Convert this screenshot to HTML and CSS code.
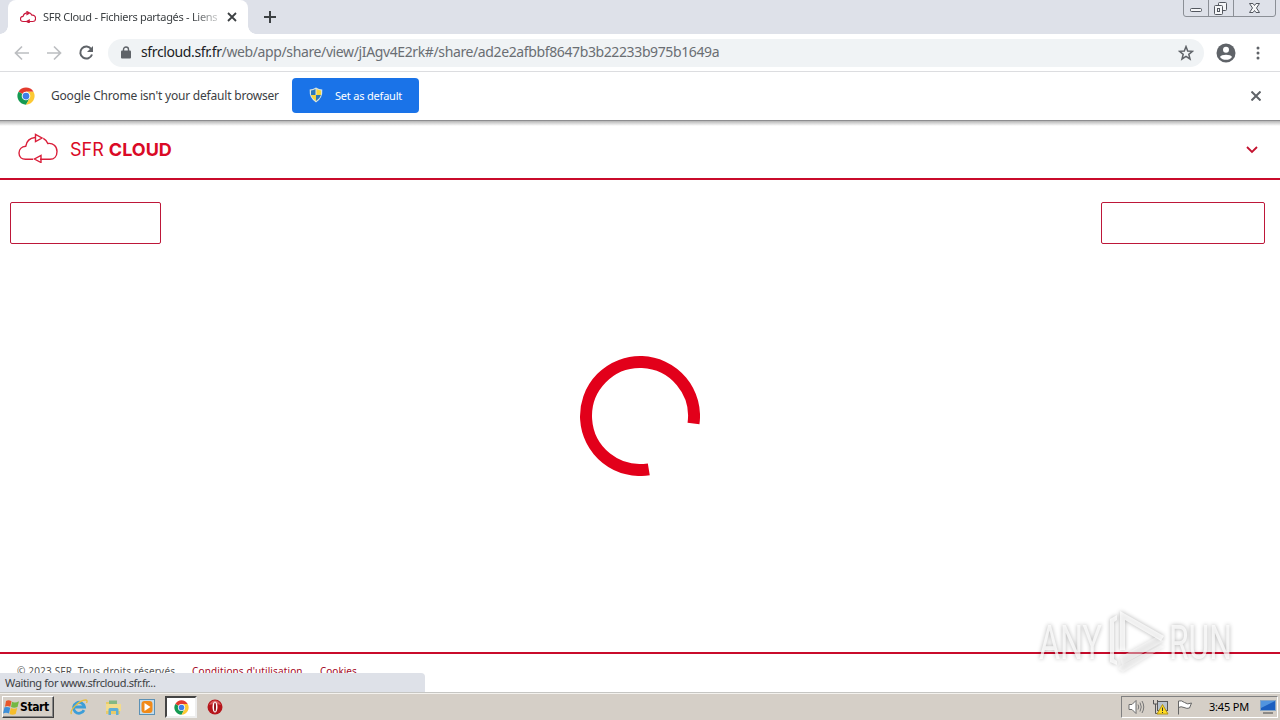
FILE: index.html
```html
<!DOCTYPE html>
<html lang="fr">
<head>
  <meta charset="UTF-8" />
  <title>SFR Cloud - Fichiers partagés - Liens</title>
  <link rel="stylesheet" href="styles.css">
</head>
<body>
  <svg class="defs" width="0" height="0">
    <symbol id="chrome" viewBox="0 0 48 48">
      <circle cx="24" cy="24" r="23" fill="#fff"/>
      <path d="M24 24L4.1 12.5A23 23 0 0 1 43.9 12.5H24z" fill="#e33b2e"/>
      <path d="M24 24L4.1 12.5A23 23 0 0 0 24 47L34 29.7z" fill="#159a52"/>
      <path d="M24 12.5H43.9A23 23 0 0 1 24 47L34 29.7z" fill="#fcc934"/>
      <circle cx="24" cy="24" r="11.5" fill="#fff"/>
      <circle cx="24" cy="24" r="9" fill="#3f7fe8"/>
    </symbol>
    <symbol id="cloud" viewBox="0 0 40 30">
      <path d="M17 4.5C12 5 8.5 8.5 7.8 13.2C3.5 13.5 1 16.5 1 20C1 24 4 26.3 7.5 26.3H15M22 26.3H32C36 26.3 39 23.5 39 18.5C39 13 35 9.8 29.8 10.5C28.8 8 27.2 6.4 25.3 5.4"/>
      <path d="M17.5 1.5V8.5L24 5zM23 22.5V29.5L16.5 26z"/>
    </symbol>
  </svg>

  <div class="tabstrip">
    <div class="tab">
      <svg class="tab-icon" width="16" height="12"><use href="#cloud"/></svg>
      <span class="tab-title">SFR Cloud - Fichiers partagés - Liens</span>
      <svg class="tab-close" width="10" height="10" viewBox="0 0 10 10"><path d="M1 1L9 9M9 1L1 9"/></svg>
    </div>
    <svg class="new-tab" width="12" height="12" viewBox="0 0 12 12"><path d="M6 0V12M0 6H12"/></svg>
    <div class="window-buttons">
      <svg width="97" height="17" viewBox="0 0 97 17">
        <path d="M.5 0V14Q.5 16.5 3 16.5H90Q92.5 16.5 92.5 14V0M25.5 0V16M50.5 0V16" fill="none" stroke="#8b8f96"/>
        <g fill="#f5f6f8" stroke="#53575f">
          <rect x="7.5" y="8.5" width="11" height="3" rx="1"/>
          <rect x="35.5" y="2.5" width="8" height="8" rx="1"/>
          <rect x="31.5" y="5.5" width="8" height="9" rx="1"/>
          <rect x="34.5" y="8.5" width="2" height="3"/>
          <path d="M66.5 3.5H70L71.5 5.5L73 3.5H76.5L73.5 8L76.5 12.5H73L71.5 10.5L70 12.5H66.5L69.5 8z"/>
        </g>
      </svg>
    </div>
  </div>

  <div class="toolbar">
    <svg class="nav-icon off" width="16" height="16" viewBox="0 0 16 16"><path d="M15 8H2M8 1.5L1.5 8L8 14.5"/></svg>
    <svg class="nav-icon off" width="16" height="16" viewBox="0 0 16 16"><path d="M1 8H14M8 1.5L14.5 8L8 14.5"/></svg>
    <svg class="nav-icon" width="16" height="16" viewBox="0 0 16 16"><path d="M13.3 4.2A6 6 0 1 0 14 9.5"/><path class="solid" d="M15 1V7H9z"/></svg>
    <div class="address">
      <svg width="10" height="13" viewBox="0 0 10 13"><path d="M2.5 5V3.5a2.5 2.5 0 0 1 5 0V5" fill="none" stroke="#5f6368" stroke-width="1.4"/><rect y="4.5" width="10" height="8" rx="1" fill="#5f6368"/></svg>
      <span class="url"><b>sfrcloud.sfr.fr</b>/web/app/share/view/jIAgv4E2rk#/share/ad2e2afbbf8647b3b22233b975b1649a</span>
      <svg class="star" width="16" height="16" viewBox="0 0 16 16"><path d="M8 1.6L9.7 6L14.5 6.3L10.8 9.3L12 14L8 11.4L4 14L5.2 9.3L1.5 6.3L6.3 6z"/></svg>
    </div>
    <svg class="avatar" width="20" height="20" viewBox="0 0 20 20"><circle cx="10" cy="10" r="9.5" fill="#5f6368"/><circle cx="10" cy="6.7" r="3" fill="#fff"/><path d="M4 14C5 11 15 11 16 14C13.5 17.8 6.5 17.8 4 14z" fill="#fff"/></svg>
    <svg class="dots" width="4" height="14" viewBox="0 0 4 14"><g fill="#5f6368"><circle cx="2" cy="2" r="1.5"/><circle cx="2" cy="7" r="1.5"/><circle cx="2" cy="12" r="1.5"/></g></svg>
  </div>

  <div class="infobar">
    <svg width="18" height="18"><use href="#chrome"/></svg>
    <span class="info-text">Google Chrome isn't your default browser</span>
    <button class="default-btn">
      <svg width="14" height="16" viewBox="0 0 14 16">
        <path d="M7 .5Q10 2.5 13.3 2.5Q14 11 7 15.5Q0 11 .7 2.5Q4 2.5 7 .5z" fill="#d9e4df"/>
        <path d="M6.5 2Q4.5 3.3 2 3.5V8H6.5z" fill="#2978ba"/><path d="M7.5 2Q9.5 3.3 12 3.5V8H7.5z" fill="#f5d53b"/>
        <path d="M2 8H7V14Q2.7 11 2 8z" fill="#f5d53b"/><path d="M12 8H7V14Q11.3 11 12 8z" fill="#2978ba"/>
      </svg>
      <span>Set as default</span>
    </button>
    <svg class="info-close" width="10" height="10" viewBox="0 0 10 10"><path d="M.5 .5L9.5 9.5M9.5 .5L.5 9.5"/></svg>
  </div>

  <div class="page">
    <header class="header">
      <svg class="logo" width="40" height="30"><use href="#cloud"/></svg>
      <span class="brand">SFR <b>CLOUD</b></span>
      <svg class="chevron" width="12" height="8" viewBox="0 0 12 8"><path d="M1 1L6 6L11 1"/></svg>
    </header>
    <main class="main">
      <div class="actions">
        <div class="box box-left"></div>
        <div class="box box-right"></div>
      </div>
      <svg class="loader" width="120" height="120" viewBox="0 0 120 120"><path d="M113.5 67.5A54 54 0 1 0 68.8 113.3"/></svg>
    </main>
    <footer class="footer">
      <span class="copy">© 2023 SFR. Tous droits réservés</span>
      <a class="terms">Conditions d'utilisation</a>
      <a class="cookies">Cookies</a>
    </footer>
    <div class="status"><span>Waiting for www.sfrcloud.sfr.fr...</span></div>
  </div>

  <div class="taskbar">
    <div class="start">
      <svg width="17" height="17" viewBox="0 0 17 16">
        <path d="M3 1.5Q5.5 0 8.5 1.7L7.3 7.2Q4.5 6 2 7.2z" fill="#e8572b"/><path d="M9 2.3Q12 4 16 1.7L14.5 7.5Q11 9 8 7.5z" fill="#74b843"/>
        <path d="M1.5 7.8Q4.5 7 7.2 8.2L6 14Q3 12.5 0 14z" fill="#3e8fd8"/><path d="M7.8 8.5Q11 10 14.2 8.5L12.7 14.5Q9.5 16 6.5 14.5z" fill="#f5bd2b"/>
      </svg>
      <span>Start</span>
    </div>
    <div class="tasks">
      <div class="task">
        <svg width="18" height="18" viewBox="0 0 18 18"><path d="M14 12.2A5.5 5.5 0 1 1 14.5 9H5" fill="none" stroke="#3c9ed8" stroke-width="2.8"/><path d="M1.5 16C-1 13 9 2 15.5 2Q18 2 16.5 5" fill="none" stroke="#e8bd3c" stroke-width="1.3"/></svg>
      </div>
      <div class="task">
        <svg width="17" height="17" viewBox="0 0 17 17"><path d="M1 3H6L7.5 5H15V15H1z" fill="#e9cb68"/><path d="M4 1.5H12V5H4z" fill="#83b882"/><path d="M1 5H16V12H1z" fill="#f3dc8c"/><path d="M3.5 16V10.5Q3.5 9 5 9H12Q13.5 9 13.5 10.5V16H11V12H6V16z" fill="#5eaed5"/></svg>
      </div>
      <div class="task">
        <svg width="16" height="16" viewBox="0 0 16 16"><rect x=".5" y=".5" width="15" height="15" fill="#c4dcec" stroke="#5c91b5"/><rect x="2.5" y="2" width="11" height="12" rx="3" fill="#f18a19"/><path d="M5.5 4V12L11.5 8z" fill="#fff"/></svg>
      </div>
      <div class="task active"><svg width="15" height="15"><use href="#chrome"/></svg></div>
      <div class="task">
        <svg width="16" height="16" viewBox="0 0 16 16"><circle cx="8" cy="8" r="7.5" fill="#b6161b"/><path d="M2 6Q4 1.5 8 1.5T14 6Q8 4 2 6z" fill="#d8595a"/><ellipse cx="8" cy="8" rx="2.5" ry="5.5" fill="#fff"/><ellipse cx="8" cy="8" rx="1" ry="4.5" fill="#90151a"/></svg>
      </div>
    </div>
    <div class="tray">
      <svg width="17" height="16" viewBox="0 0 17 16"><path d="M1 5.5H4L8 1.5V14.5L4 10.5H1z" fill="#fff" stroke="#6d6d6d"/><path d="M10 5.5Q11.5 8 10 10.5M12 3.5Q14.5 8 12 12.5M14 2Q17.5 8 14 14" fill="none" stroke="#777"/></svg>
      <svg width="17" height="16" viewBox="0 0 17 16"><rect x="5.5" y="2.5" width="10" height="9" fill="#b9c3cd" stroke="#555"/><path d="M1.5 1V5H5.5V1M3.5 5V14.5H7" fill="none" stroke="#555"/><path d="M10.5 5.5L16 15H5z" fill="#ffdc22" stroke="#b29317"/><path d="M10.5 8.5V12M10.5 13V14" stroke="#333"/></svg>
      <svg width="17" height="16" viewBox="0 0 17 16"><path d="M2.5 15.5V2Q5.5 1 8.5 3.5T15.5 4L13.5 9Q11 10 8 8.5T2.5 8.5" fill="#fff" stroke="#666"/></svg>
      <span class="clock">3:45 PM</span>
      <svg class="desktop" width="16" height="14" viewBox="0 0 16 14"><rect x=".5" y=".5" width="15" height="10" fill="#1c5fc0" stroke="#86a5c5"/><path d="M1 1H15L1 8z" fill="#5194de"/><path d="M3 13H13" stroke="#444"/></svg>
    </div>
  </div>

  <!-- watermark over the page -->
  <svg class="watermark" width="212" height="76" viewBox="0 0 212 76">
    <text x="7" y="57" textLength="63" lengthAdjust="spacingAndGlyphs">ANY</text>
    <text x="137" y="57" textLength="63" lengthAdjust="spacingAndGlyphs">RUN</text>
    <path d="M78 17L85 13V18L82 20V57L85 59V63L78 60z"/>
    <path d="M88 9L132 34L129 39L93 18V48H88z"/>
    <path d="M88 55L124 35L132 39L90 63zM88 64L129 43L132 45L91 70L86 67z" opacity=".55"/>
  </svg>
</body>
</html>
```
FILE: styles.css
```css
* {
  box-sizing: border-box;
}

body {
  margin: 0;
  width: 1280px;
  height: 720px;
  overflow: hidden;
  display: flex;
  flex-direction: column;
  background: #fff;
  font-family: "Noto Sans", "Open Sans", sans-serif;
  font-size: 12px;
  color: #3c4043;
  white-space: nowrap;
}

svg {
  display: block;
  flex: none;
}

.defs {
  position: absolute;
}

/* browser window */
.tabstrip {
  height: 34px;
  flex: none;
  background: #dee1e9;
  display: flex;
  padding-left: 8px;
}

.tab {
  width: 240px;
  background: #fff;
  border-radius: 8px 8px 0 0;
  display: flex;
  align-items: center;
  padding: 0 11px 0 12px;
  position: relative;
}

.tab::before, .tab::after {
  content: '';
  position: absolute;
  bottom: 0;
  width: 8px;
  height: 8px;
}

.tab::before {
  left: -8px;
  background: radial-gradient(circle at 0 0, #dee1e9 7.5px, #fff 8px);
}

.tab::after {
  right: -8px;
  background: radial-gradient(circle at 100% 0, #dee1e9 7.5px, #fff 8px);
}

.tab-icon {
  fill: none;
  stroke: #c9183c;
  stroke-width: 3;
}

.tab-title {
  width: 176px;
  margin: 0 0 2px 7px;
  overflow: hidden;
  font-size: 11px;
  letter-spacing: -0.29px;
  -webkit-mask-image: linear-gradient(to right, #000 150px, rgba(0, 0, 0, 0.2) 176px);
}

.tab-close {
  margin-left: auto;
  fill: none;
  stroke: #3c4043;
  stroke-width: 1.8;
}

.new-tab {
  margin: 11px 0 0 16px;
  stroke: #3c4043;
  stroke-width: 2;
}

.window-buttons {
  margin-left: auto;
}

.toolbar {
  height: 38px;
  flex: none;
  display: flex;
  align-items: center;
  padding: 0 20px 0 14px;
  gap: 16px;
  border-bottom: 1px solid #dcdde0;
}

.nav-icon {
  fill: none;
  stroke: #5f6368;
  stroke-width: 2;
}

.nav-icon .solid {
  fill: #5f6368;
  stroke: none;
}

.off {
  stroke: #bcbec1;
  stroke-width: 1.7;
}

.address {
  width: 1096px;
  height: 28px;
  margin-left: -2px;
  border-radius: 14px;
  background: #f0f3f5;
  display: flex;
  align-items: center;
  padding: 0 10px 0 13px;
}

.url {
  margin: -2px 0 0 10px;
  font-size: 14px;
  letter-spacing: -0.38px;
  color: #6a6e73;
}

.url b {
  font-weight: normal;
  color: #202124;
}

.star {
  margin-left: auto;
  fill: none;
  stroke: #5f6368;
  stroke-width: 1.5;
}

.avatar {
  margin-left: -4px;
}

.dots {
  margin-left: 4px;
}

.infobar {
  height: 49px;
  flex: none;
  display: flex;
  align-items: center;
  padding: 0 19px 0 17px;
  border-bottom: 1px solid #8d8d8f;
}

.info-text {
  width: 241px;
  margin: -1px 0 0 16px;
  font-size: 12px;
  letter-spacing: -0.2px;
}

.default-btn {
  width: 127px;
  height: 35px;
  margin-bottom: 2px;
  border: none;
  border-radius: 4px;
  background: #1a73e8;
  color: #fff;
  font-family: inherit;
  font-size: 11px;
  letter-spacing: -0.2px;
  display: flex;
  align-items: center;
  padding: 0 0 0 17px;
  gap: 12px;
}

.info-close {
  margin-left: auto;
  stroke: #5f6368;
  stroke-width: 2;
}

/* page */
.page {
  flex: 1;
  min-height: 0;
  display: flex;
  flex-direction: column;
  position: relative;
  overflow: hidden;
}

.header {
  height: 59px;
  flex: none;
  border-bottom: 2px solid #c90b2b;
  background: linear-gradient(#b5b5b5, #fff 5px);
  display: flex;
  align-items: center;
  padding: 0 22px 0 18px;
}

.logo {
  margin-top: -4px;
  fill: none;
  stroke: #da1f3a;
  stroke-width: 1.4;
}

.brand {
  margin-left: 12px;
  font-family: Inter, sans-serif;
  font-size: 18px;
  color: #da0a26;
}

.chevron {
  margin-left: auto;
  fill: none;
  stroke: #c4122f;
  stroke-width: 1.8;
}

.main {
  flex: 1;
  padding: 22px 15px 0 10px;
}

.actions {
  display: flex;
  justify-content: space-between;
}

.box {
  height: 42px;
  border: 1px solid #bd1739;
  border-radius: 2px;
}

.box-left {
  width: 151px;
}

.box-right {
  width: 164px;
}

.loader {
  margin: 112px 0 0 570px;
  fill: none;
  stroke: #e2001a;
  stroke-width: 12;
}

.footer {
  height: 40px;
  flex: none;
  border-top: 2px solid #c90b2b;
  display: flex;
  padding: 10px 17px 0;
  font-size: 10px;
  line-height: 15px;
  color: #555;
}

.copy {
  width: 175px;
  letter-spacing: 0.18px;
}

.terms, .cookies {
  color: #a50b28;
  text-decoration: underline;
}

.terms {
  width: 128px;
  letter-spacing: 0.13px;
}

.status {
  position: absolute;
  left: 0;
  bottom: 0;
  width: 425px;
  height: 19px;
  background: #dee1e8;
  border-radius: 0 4px 0 0;
  padding-left: 5px;
  font-size: 11px;
  letter-spacing: -0.38px;
  line-height: 19px;
}

/* taskbar */
.taskbar {
  height: 28px;
  flex: none;
  background: #d5cfc7;
  border-top: 1px solid #c6c6c3;
  box-shadow: inset 0 1px #f4f2ee;
  display: flex;
  align-items: center;
  padding: 1px 2px 0;
  color: #000;
}

.start {
  width: 52px;
  height: 22px;
  border: 1px solid;
  border-color: #fff #404040 #404040 #fff;
  box-shadow: inset -1px -1px #888;
  display: flex;
  align-items: center;
  font-family: "DejaVu Sans Condensed", "DejaVu Sans", sans-serif;
  font-size: 12px;
  font-weight: bold;
  letter-spacing: -0.4px;
}

.tasks {
  display: flex;
  margin-left: 9px;
  gap: 2px;
}

.task {
  width: 32px;
  height: 22px;
  display: flex;
  align-items: center;
  justify-content: center;
}

.active {
  background: #fff;
  border: 2px solid;
  border-color: #444 #eee #eee #444;
}

.tray {
  width: 157px;
  height: 22px;
  margin-left: auto;
  border: 1px solid;
  border-color: #808080 #fff #fff #808080;
  display: flex;
  align-items: center;
  gap: 7px;
  padding-left: 6px;
}

.clock {
  width: 40px;
  margin: -2px 0 0 9px;
  font-size: 11px;
  letter-spacing: -0.2px;
}

.desktop {
  margin-left: 4px;
}

.watermark {
  position: absolute;
  left: 1032px;
  top: 602px;
  fill: #fff;
  fill-opacity: 0.75;
  font-family: Roboto, sans-serif;
  font-size: 49px;
  filter: drop-shadow(0 0 2px rgba(0, 0, 0, 0.4));
}
```
